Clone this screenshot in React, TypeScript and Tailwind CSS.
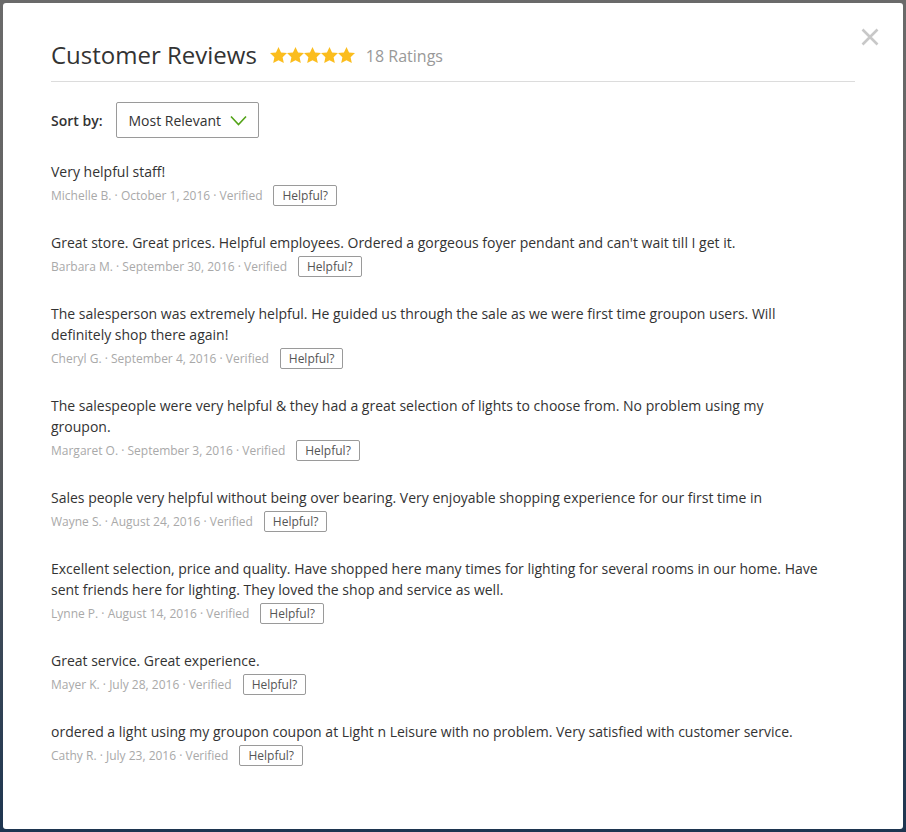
import React from 'react';

interface Review {
  text: string;
  author: string;
  date: string;
}

const reviews: Review[] = [
  { text: 'Very helpful staff!', author: 'Michelle B.', date: 'October 1, 2016' },
  {
    text: "Great store. Great prices. Helpful employees. Ordered a gorgeous foyer pendant and can't wait till I get it.",
    author: 'Barbara M.',
    date: 'September 30, 2016',
  },
  {
    text: 'The salesperson was extremely helpful. He guided us through the sale as we were first time groupon users. Will definitely shop there again!',
    author: 'Cheryl G.',
    date: 'September 4, 2016',
  },
  {
    text: 'The salespeople were very helpful & they had a great selection of lights to choose from. No problem using my groupon.',
    author: 'Margaret O.',
    date: 'September 3, 2016',
  },
  {
    text: 'Sales people very helpful without being over bearing. Very enjoyable shopping experience for our first time in',
    author: 'Wayne S.',
    date: 'August 24, 2016',
  },
  {
    text: 'Excellent selection, price and quality. Have shopped here many times for lighting for several rooms in our home. Have sent friends here for lighting. They loved the shop and service as well.',
    author: 'Lynne P.',
    date: 'August 14, 2016',
  },
  { text: 'Great service. Great experience.', author: 'Mayer K.', date: 'July 28, 2016' },
  {
    text: 'ordered a light using my groupon coupon at Light n Leisure with no problem. Very satisfied with customer service.',
    author: 'Cathy R.',
    date: 'July 23, 2016',
  },
];

function Star() {
  return (
    <svg width="17" height="17" viewBox="0 0 24 24" className="fill-[#fbbd1e]">
      <path d="M12 0l3.6 7.6 8.4 1-6.2 5.8 1.7 8.3L12 18.6l-7.5 4.1 1.7-8.3L0 8.6l8.4-1z" />
    </svg>
  );
}

function ReviewItem({ review }: { review: Review }) {
  return (
    <div className="flex flex-col">
      <p className="w-[772px] text-[14px] leading-[21px] text-[#333]">{review.text}</p>
      {/* meta line + helpful button */}
      <div className="mt-[3px] flex h-[21px] items-center gap-[11px]">
        <span className="text-[12px] text-[#a9a9a9]">
          {review.author} · {review.date} · Verified
        </span>
        <button className="h-[21px] rounded-[2px] border border-[#9a9a9a] px-[8px] text-[12px] leading-[19px] text-[#555]">
          Helpful?
        </button>
      </div>
    </div>
  );
}

export default function App() {
  return (
    <div
      className="h-[832px] w-[906px] bg-gradient-to-b from-[#6a6a6a] via-[#5e5e5e] to-[#1d3550] p-[3px]"
      style={{ fontFamily: '"Open Sans", "Liberation Sans", sans-serif' }}
    >
      <div className="relative h-[826px] w-[900px] rounded-[3px] bg-white px-[48px] pt-[36px]">
        {/* close */}
        <button className="absolute right-[24px] top-[25px]">
          <svg width="18" height="18" viewBox="0 0 18 18" className="stroke-[#c8c8c8]" strokeWidth="2.6">
            <path d="M1.5 1.5l15 15M16.5 1.5l-15 15" />
          </svg>
        </button>

        {/* header */}
        <div className="flex items-center border-b border-[#dcdcdc] pb-[10px]">
          <h1 className="text-[24px] leading-[32px] text-[#333]">Customer Reviews</h1>
          <div className="ml-[13px] mt-[1px] flex">
            <Star />
            <Star />
            <Star />
            <Star />
            <Star />
          </div>
          <span className="ml-[11px] mt-[1px] text-[16px] text-[#999]">18 Ratings</span>
        </div>

        {/* sort */}
        <div className="mt-[20px] flex items-center gap-[13px]">
          <span className="text-[14px] font-semibold text-[#333]">Sort by:</span>
          <div className="flex h-[36px] w-[143px] items-center justify-between rounded-[2px] border border-[#9a9a9a] pl-[12px] pr-[11px]">
            <span className="text-[14px] text-[#333]">Most Relevant</span>
            <svg width="17" height="11" viewBox="0 0 17 11" fill="none" className="stroke-[#53a318]" strokeWidth="1.6">
              <path d="M1 1.5l7.5 8 7.5-8" />
            </svg>
          </div>
        </div>

        {/* list */}
        <div className="mt-[23px] flex flex-col gap-[26px]">
          {reviews.map((r) => (
            <ReviewItem key={r.author} review={r} />
          ))}
        </div>
      </div>
    </div>
  );
}
